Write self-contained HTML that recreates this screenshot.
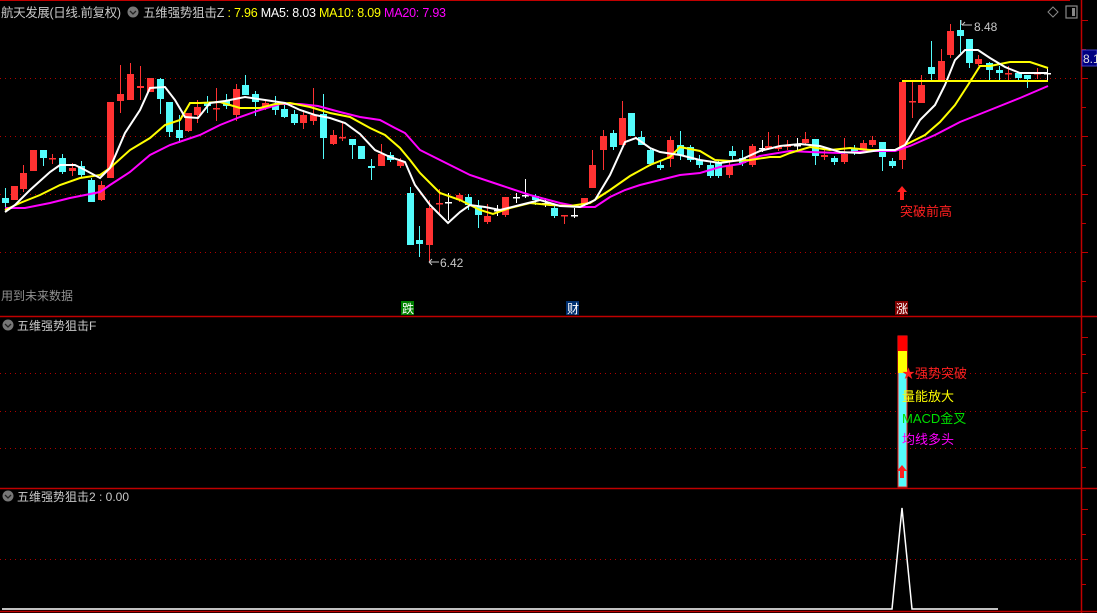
<!DOCTYPE html>
<html><head><meta charset="utf-8"><style>
html,body{margin:0;padding:0;background:#000;overflow:hidden}
svg{display:block}
text{font-family:"Liberation Sans","Noto Sans CJK SC",sans-serif}
</style></head><body>
<svg id="s" width="1097" height="613" xmlns="http://www.w3.org/2000/svg">
<rect width="1097" height="613" fill="#000"/>
<line x1="0" y1="0.5" x2="1070" y2="0.5" stroke="#c00000"/>
<g stroke="#b00000" stroke-dasharray="1,4">
<line x1="0" y1="78.5" x2="1078" y2="78.5"/><line x1="0" y1="136.5" x2="1078" y2="136.5"/>
<line x1="0" y1="194.5" x2="1078" y2="194.5"/><line x1="0" y1="252.5" x2="1078" y2="252.5"/>
<line x1="0" y1="373.5" x2="1078" y2="373.5"/><line x1="0" y1="411.5" x2="1078" y2="411.5"/>
<line x1="0" y1="448.5" x2="1078" y2="448.5"/><line x1="0" y1="559.5" x2="1078" y2="559.5"/>
</g>
<g stroke="#c00000" stroke-width="1.5">
<line x1="0" y1="316.5" x2="1097" y2="316.5"/><line x1="0" y1="488.5" x2="1097" y2="488.5"/>
<line x1="0" y1="611.5" x2="1097" y2="611.5"/>
<line x1="1081.5" y1="0" x2="1081.5" y2="613"/>
</g>
<g id="ticks" stroke="#c00000"></g>
<g id="candles"></g>
<g fill="none" stroke-width="2">
<polyline stroke="#ff00ff" points="5,208 25,208 50,203 70,198 100,192 110,185 130,172 150,155 170,145 185,140 200,135 220,125 240,117 260,110 280,104 300,104 318,106 340,112 360,117 380,120 395,128 405,133 420,150 440,160 470,175 500,185 530,195 560,203 580,207 595,207 610,197 625,190 640,185 660,180 680,175 700,173 720,167 740,164 760,156 790,151 810,152 840,153 870,151 895,151 910,146 935,135 960,122 990,110 1020,98 1048,86"/>
<polyline stroke="#ffff00" points="5,210 20,203 40,195 60,185 80,178 100,175 110,168 130,150 150,138 165,125 180,120 190,103 200,103 220,102 240,108 260,108 275,104 290,103 310,107 330,113 350,117 370,128 385,135 400,148 410,160 420,173 440,193 460,200 480,210 493,214 510,208 530,203 550,205 570,206 590,203 610,190 630,176 650,165 670,157 680,147 700,151 715,160 730,161 750,160 770,157 780,157 790,153 810,147 830,150 850,148 870,150 895,150 905,145 925,135 940,122 955,105 968,85 980,66 990,66 1010,62 1030,62 1048,68"/>
<polyline stroke="#ffffff" points="5,212 15,205 30,190 50,172 60,165 75,165 85,170 100,178 110,168 125,133 140,110 150,88 165,87 175,100 185,117 198,118 210,103 225,101 245,97 265,100 285,103 300,110 315,115 330,118 345,123 360,134 375,150 390,157 405,162 415,185 430,205 448,223 460,212 470,205 485,207 500,210 520,205 540,200 560,206 580,207 595,200 610,175 625,142 636,138 650,148 660,152 680,155 700,160 720,163 740,160 760,151 780,146 800,144 820,146 840,152 860,153 880,150 895,150 905,145 920,120 935,105 945,85 955,60 965,50 978,50 990,58 1005,67 1020,73 1048,73"/>
<line x1="902" y1="81" x2="1048" y2="81" stroke="#ffff00"/>
</g>
<!-- header -->
<text x="1" y="17" font-size="12.5" fill="#c8c8c8" textLength="120">航天发展(日线.前复权)</text>
<circle cx="133" cy="12" r="5.5" fill="#777"/><path d="M130,11 l3,3 l3,-3" stroke="#222" fill="none" stroke-width="1.3"/>
<text x="143" y="17" font-size="12.5" textLength="303"><tspan fill="#c8c8c8">五维强势狙击Z</tspan><tspan fill="#ffff00"> : 7.96</tspan><tspan fill="#ffffff">  MA5: 8.03</tspan><tspan fill="#ffff00">  MA10: 8.09</tspan><tspan fill="#ff00ff">  MA20: 7.93</tspan></text>
<path d="M1053,7 l5,5 l-5,5 l-5,-5z" fill="none" stroke="#888"/>
<rect x="1066" y="6" width="11" height="12" fill="none" stroke="#888" stroke-width="1.2"/><rect x="1072" y="8" width="3" height="8" fill="#888"/>
<rect x="1082" y="50" width="15" height="16" fill="#000080" stroke="#4040c0"/>
<text x="1083" y="63" font-size="12" fill="#e0e0e0">8.1</text>
<text x="974" y="31" font-size="12" fill="#c8c8c8">8.48</text>
<path d="M962,25 h10 M962,25 l3,-3 M961,20 v5" stroke="#c8c8c8" fill="none"/>
<text x="440" y="267" font-size="12" fill="#c8c8c8">6.42</text>
<path d="M429,262 h10 M429,262 l3,-3 M429,262 l3,3" stroke="#c8c8c8" fill="none"/>
<path d="M902,186 l-5,6 h3 v8 h4 v-8 h3z" fill="#ff2020"/>
<text x="900" y="216" font-size="13" fill="#ff2020">突破前高</text>
<text x="1" y="300" font-size="12" fill="#909090">用到未来数据</text>
<rect x="401" y="301" width="13" height="14" fill="#008000"/><text x="402" y="313" font-size="12" fill="#fff">跌</text>
<rect x="566" y="301" width="13" height="14" fill="#003070"/><text x="567" y="313" font-size="12" fill="#fff">财</text>
<rect x="895" y="301" width="13" height="14" fill="#800000"/><text x="896" y="313" font-size="12" fill="#fff">涨</text>
<!-- panel 2 -->
<circle cx="8" cy="325" r="5.5" fill="#777"/><path d="M5,324 l3,3 l3,-3" stroke="#222" fill="none" stroke-width="1.3"/>
<text x="17" y="330" font-size="12" fill="#c8c8c8">五维强势狙击F</text>
<rect x="898" y="336" width="9" height="151" fill="#54fcfc" stroke="#ff2020"/>
<rect x="898" y="336" width="9" height="15" fill="#ff0000"/>
<rect x="898" y="351" width="9" height="22" fill="#ffff00"/>
<path d="M902,465 l-5,6 h3 v7 h4 v-7 h3z" fill="#ff2020"/>
<text x="902" y="378" font-size="13" fill="#ff2020">★强势突破</text>
<text x="902" y="401" font-size="13" fill="#ffff00">量能放大</text>
<text x="902" y="423" font-size="13" fill="#00e000">MACD金叉</text>
<text x="902" y="444" font-size="13" fill="#ff00ff">均线多头</text>
<!-- panel 3 -->
<circle cx="8" cy="496" r="5.5" fill="#777"/><path d="M5,495 l3,3 l3,-3" stroke="#222" fill="none" stroke-width="1.3"/>
<text x="17" y="501" font-size="12" fill="#c8c8c8">五维强势狙击2 : 0.00</text>
<polyline points="2,609 892,609 902,508 912,609 998,609" fill="none" stroke="#fff" stroke-width="1.5"/>
</svg>
<script>
var C=[[5,198,203,188,207],[14,200,186,186,200],[23,189,173,165,192],[33,171,150,150,171],[43,150,158,150,166],[52,158,158,154,164],[62,158,172,154,174],[72,171,168,163,176],[81,166,175,161,178],[91,180,202,178,202],[101,200,185,181,201],[110,178,102,102,178],[120,101,94,65,113],[130,100,74,63,100],[140,88,86,66,100],[150,92,78,78,92],[160,79,99,78,114],[169,102,132,102,137],[179,130,138,115,143],[188,131,113,113,132],[197,115,107,100,123],[207,103,106,96,113],[216,108,108,88,121],[226,101,106,94,109],[236,115,89,84,121],[245,85,95,75,95],[255,94,102,91,116],[265,107,103,100,110],[275,104,110,96,115],[284,109,117,105,118],[294,114,123,110,125],[303,123,115,110,129],[313,121,115,88,125],[323,114,138,94,159],[333,144,135,130,145],[342,137,137,123,141],[352,139,145,139,159],[361,146,159,146,159],[371,166,168,159,180],[381,166,154,144,166],[390,155,160,152,162],[400,166,161,158,168],[410,193,245,187,245],[419,240,244,226,257],[429,245,208,200,262],[439,203,203,189,213],[448,202,202,193,220,1],[459,200,195,193,202],[468,197,205,194,210],[478,207,215,200,228],[487,222,216,204,224],[497,210,210,205,216,1],[505,215,197,197,217],[516,197,197,193,203,1],[525,195,195,179,198,1],[535,196,200,194,205],[545,203,203,198,207,1],[554,208,216,205,218],[564,215,215,215,224],[574,215,215,208,218,1],[584,205,198,198,208],[592,188,165,150,188],[603,150,136,130,170],[613,133,147,130,150],[622,145,118,101,145],[631,113,136,113,136],[641,137,145,131,145],[650,150,164,148,166],[660,165,168,160,170],[670,159,140,136,167],[680,145,155,131,160],[690,147,160,145,162],[699,160,165,155,168],[710,165,176,162,178],[718,163,176,160,178],[729,175,166,160,178],[732,151,156,146,160],[742,158,163,150,166],[752,165,146,144,167],[762,148,148,140,152,1],[768,149,146,132,150],[778,149,147,135,151],[787,147,145,140,150],[797,145,145,138,150,1],[805,143,139,132,145],[815,139,156,139,165],[824,157,155,150,160],[834,158,162,156,165],[844,162,154,138,164],[854,148,152,145,155],[863,150,143,140,152],[872,145,140,136,147],[882,142,157,142,171],[892,161,166,158,168],[902,160,82,82,169],[912,101,101,82,118],[921,103,85,75,103],[931,67,74,41,82],[941,82,61,49,82],[950,55,31,24,58],[960,30,36,20,53],[969,39,63,39,68],[978,64,59,55,66],[989,63,70,62,80],[999,70,73,66,80],[1008,73,73,66,80],[1018,73,78,72,80],[1027,75,79,75,88],[1037,74,73,68,79],[1047,73,73,68,80,1]];
var g=document.getElementById('candles'),h='';
C.forEach(function(c){var x=c[0],o=c[1],cl=c[2],hi=c[3],lo=c[4];
var col=c[5]?'#ffffff':(cl<o?'#ff3232':(cl>o?'#54fcfc':'#ff3232'));
h+='<line x1="'+(x+.5)+'" y1="'+hi+'" x2="'+(x+.5)+'" y2="'+lo+'" stroke="'+col+'"/>';
var t=Math.min(o,cl),b=Math.max(o,cl);
if(b-t<1.5)h+='<rect x="'+(x-3)+'" y="'+t+'" width="7" height="1.5" fill="'+col+'"/>';
else h+='<rect x="'+(x-3)+'" y="'+t+'" width="7" height="'+(b-t)+'" fill="'+col+'"/>';});
g.innerHTML=h;
var tk='',ys=[20,49,78,107,136,165,194,223,252,281,337,354,373,392,411,430,448,467,509,534,559,584];
ys.forEach(function(y,i){tk+='<line x1="1082" y1="'+(y+.5)+'" x2="'+(i%2?1086:1088)+'" y2="'+(y+.5)+'"/>';});
document.getElementById('ticks').innerHTML=tk;
</script>
</body></html>
